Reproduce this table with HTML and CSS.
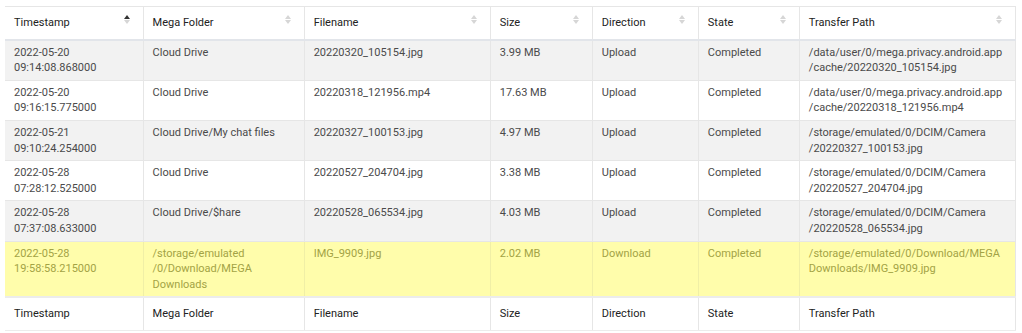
FILE: index.html
```html
<!DOCTYPE html>
<html>
<head>
    <title>Transfers</title>
    <link rel="stylesheet" href="styles.css">
</head>
<body>
    <table class="transfers">
        <colgroup>
            <col style="width:138px">
            <col style="width:161px">
            <col style="width:186px">
            <col style="width:102px">
            <col style="width:106px">
            <col style="width:101px">
            <col style="width:216px">
        </colgroup>
        <thead>
            <tr>
                <th class="sort sort-asc">Timestamp</th>
                <th class="sort">Mega Folder</th>
                <th class="sort">Filename</th>
                <th class="sort">Size</th>
                <th class="sort">Direction</th>
                <th class="sort">State</th>
                <th class="sort">Transfer Path</th>
            </tr>
        </thead>
        <tbody>
            <tr>
                <td>2022-05-20<br>09:14:08.868000</td>
                <td>Cloud Drive</td>
                <td>20220320_105154.jpg</td>
                <td>3.99 MB</td>
                <td>Upload</td>
                <td>Completed</td>
                <td>/data/user/0/mega.privacy.android.app<br>/cache/20220320_105154.jpg</td>
            </tr>
            <tr>
                <td>2022-05-20<br>09:16:15.775000</td>
                <td>Cloud Drive</td>
                <td>20220318_121956.mp4</td>
                <td>17.63 MB</td>
                <td>Upload</td>
                <td>Completed</td>
                <td>/data/user/0/mega.privacy.android.app<br>/cache/20220318_121956.mp4</td>
            </tr>
            <tr>
                <td>2022-05-21<br>09:10:24.254000</td>
                <td>Cloud Drive/My chat files</td>
                <td>20220327_100153.jpg</td>
                <td>4.97 MB</td>
                <td>Upload</td>
                <td>Completed</td>
                <td>/storage/emulated/0/DCIM/Camera<br>/20220327_100153.jpg</td>
            </tr>
            <tr>
                <td>2022-05-28<br>07:28:12.525000</td>
                <td>Cloud Drive</td>
                <td>20220527_204704.jpg</td>
                <td>3.38 MB</td>
                <td>Upload</td>
                <td>Completed</td>
                <td>/storage/emulated/0/DCIM/Camera<br>/20220527_204704.jpg</td>
            </tr>
            <tr>
                <td>2022-05-28<br>07:37:08.633000</td>
                <td>Cloud Drive/$hare</td>
                <td>20220528_065534.jpg</td>
                <td>4.03 MB</td>
                <td>Upload</td>
                <td>Completed</td>
                <td>/storage/emulated/0/DCIM/Camera<br>/20220528_065534.jpg</td>
            </tr>
            <tr class="highlight">
                <td>2022-05-28<br>19:58:58.215000</td>
                <td>/storage/emulated<br>/0/Download/MEGA<br>Downloads</td>
                <td>IMG_9909.jpg</td>
                <td>2.02 MB</td>
                <td>Download</td>
                <td>Completed</td>
                <td>/storage/emulated/0/Download/MEGA<br>Downloads/IMG_9909.jpg</td>
            </tr>
        </tbody>
        <tfoot>
            <tr>
                <th>Timestamp</th>
                <th>Mega Folder</th>
                <th>Filename</th>
                <th>Size</th>
                <th>Direction</th>
                <th>State</th>
                <th>Transfer Path</th>
            </tr>
        </tfoot>
    </table>
</body>
</html>
```

FILE: styles.css
```css
body {
    margin: 0;
    padding: 6px 6px 0 5px;
    font-family: Roboto, "Liberation Sans", sans-serif;
    font-size: 11px;
    line-height: 15.6px;
    color: #4a4a4a;
    background: #fff;
}
.transfers {
    width: 1011px;
    table-layout: fixed;
    border-collapse: collapse;
    border-top: 1px solid #e6e6e6;
    border-right: 1px solid #e6e6e6;
}
.transfers th {
    text-align: left;
    font-weight: 400;
    color: #222;
    padding: 8px 9px 8px 9px;
    border-left: 1px solid #e6e6e6;
}
.transfers th:first-child,
.transfers td:first-child {
    border-left: none;
}
.transfers thead th {
    border-bottom: 2px solid #e2e5ea;
}
.transfers tfoot th {
    border-top: 2px solid #ececec;
    border-bottom: 1px solid #ececec;
}
.transfers td {
    vertical-align: top;
    padding: 4px 9px 4px 9px;
    border-left: 1px solid #e6e6e6;
    border-top: 1px solid #e6e6e6;
    height: 31px;
}
.transfers tbody tr:nth-child(odd) td {
    background: #f2f2f2;
}
.transfers tbody tr:first-child td {
    border-top: none;
}
.transfers tbody tr.highlight td {
    background: #fffdab;
    color: #a3a345;
    border-left-color: #f0efa6;
}
.sort {
    position: relative;
}
.sort::before,
.sort::after {
    content: "";
    position: absolute;
    right: 13px;
    width: 0;
    height: 0;
    border-left: 3.5px solid transparent;
    border-right: 3.5px solid transparent;
}
.sort::before {
    top: 8px;
    border-bottom: 4px solid #d6d6d6;
}
.sort::after {
    top: 13px;
    border-top: 4px solid #d6d6d6;
}
.sort-asc::before {
    border-bottom-color: #333;
}
```
